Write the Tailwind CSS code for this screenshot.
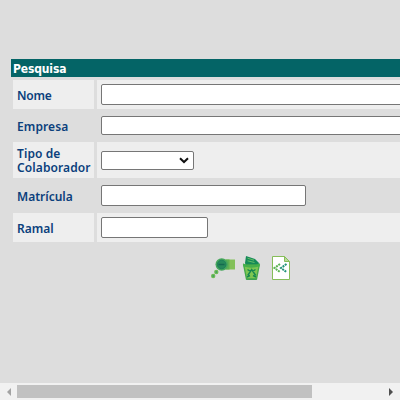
<!DOCTYPE html>
<html lang="pt">
<head>
<meta charset="utf-8">
<title>Pesquisa</title>
<script src="https://cdn.jsdelivr.net/npm/@tailwindcss/browser@4"></script>
</head>
<body class="w-[400px] h-[400px] overflow-hidden bg-[#dddddd] flex flex-col font-['Noto_Sans',sans-serif]">
<main class="flex-1 min-h-0 pt-[59px] pl-[11px] overflow-hidden">
  <h1 class="h-[18px] pl-[2px] bg-[#046466] text-white text-[12px] leading-[20px] font-bold font-['DejaVu_Sans_Condensed','DejaVu_Sans',sans-serif] [font-stretch:condensed] tracking-[-0.15px]">Pesquisa</h1>
  <form class="pt-[3px] pl-[2px] flex flex-col gap-[3px] text-[12px] leading-[14px] font-semibold text-[#0b3f7c]">
    <div class="flex gap-[3px] h-[29px]">
      <label class="w-[81px] bg-[#eeeeee] pl-1 pt-[2px] flex items-center tracking-[-0.2px]">Nome</label>
      <div class="flex-1 bg-[#eeeeee] pl-1 flex items-center overflow-hidden"><input class="shrink-0 w-[400px] h-[21px] bg-white border border-[#767676] rounded-[2px]"></div>
    </div>
    <div class="flex gap-[3px] h-[27px]">
      <label class="w-[81px] pl-1 pt-[2px] flex items-center tracking-[0.1px]">Empresa</label>
      <div class="flex-1 pl-1 flex items-center overflow-hidden"><div class="shrink-0 w-[400px] h-[19px] bg-white border border-[#767676] rounded-[2px]"></div></div>
    </div>
    <div class="flex gap-[3px] h-[36px]">
      <label class="w-[81px] bg-[#eeeeee] pl-1 pt-[2px] flex items-center tracking-[0.1px]"><span>Tipo de<br>Colaborador</span></label>
      <div class="flex-1 bg-[#eeeeee] pl-1 flex items-center"><div class="w-[93px] h-[19px] bg-white border border-[#767676] rounded-[2px] flex items-center justify-end pr-1">
        <svg width="10" height="7" viewBox="0 0 10 7" fill="none" stroke="#101010" stroke-width="2"><path d="M1 1.2 5 5 9 1.2"/></svg></div></div>
    </div>
    <div class="flex gap-[3px] h-[29px]">
      <label class="w-[81px] pl-1 pt-[2px] flex items-center">Matrícula</label>
      <div class="flex-1 pl-1 flex items-center"><input class="w-[205px] h-[21px] bg-white border border-[#767676] rounded-[2px]"></div>
    </div>
    <div class="flex gap-[3px] h-[29px]">
      <label class="w-[81px] bg-[#eeeeee] pl-1 pt-[2px] flex items-center">Ramal</label>
      <div class="flex-1 bg-[#eeeeee] pl-1 flex items-center"><input class="w-[107px] h-[21px] bg-white border border-[#767676] rounded-[2px]"></div>
    </div>
  </form>
  <div class="flex pt-[13px] pl-[199px] gap-[6px]">
    <svg width="26" height="26" viewBox="0 0 26 26">
      <path d="M10 4.5h15v10H10z" fill="#83c05a"/><path d="M16 4.5h3.5v10H16z" fill="#60b052"/>
      <circle cx="11.7" cy="9.5" r="6.2" fill="#45a65c"/><circle cx="11.7" cy="9.5" r="4.3" fill="#27895a" stroke="#1b7a59" stroke-width=".8"/><path d="M8.5 9.5h6" stroke="#15694f" stroke-width="1.5"/>
      <circle cx="6.3" cy="17" r="2.2" fill="#6dbb53"/><circle cx="3.2" cy="21" r="2.2" fill="#6dbb53"/><circle cx="6.3" cy="17" r=".8" fill="#2f936a"/><circle cx="3.2" cy="21" r=".8" fill="#2f936a"/>
    </svg>
    <svg width="20" height="26" viewBox="0 0 20 26">
      <path d="m3 8 1-7 9 3 4 4-1 3H4z" fill="#168a58"/><path d="m5.5 3.2 6.5 2M5.5 5.8l7 1.7" stroke="#63c066"/>
      <path d="m1.7 10 2.8 14h10l2.8-14z" fill="#7dc652" stroke="#43a84a" stroke-width="1.3"/><path d="M1 8.3c4 3.2 12 3.2 17 0l-.8 3.2c-5 1.5-11 1.5-15.6 0z" fill="#45b04b"/>
      <path d="m5.7 20.5 4-6 4 6m-8.2-6 3 1.8m5-1.8-3 1.8M5 22l3-1.5m6 1.5-3-1.5" fill="none" stroke="#168650" stroke-width="1.4"/><path d="M4.5 24.4h10" stroke="#3aa04e"/>
    </svg>
    <svg width="20" height="26" viewBox="0 0 20 26" class="ml-[3px]">
      <path d="M1.5 1.5h12l5 5v18h-17z" fill="#fff" stroke="#86bd59"/><path d="M13.5 1.5v5h5z" fill="#b6da99" stroke="#86bd59"/>
      <path d="M9 9 3.5 13 9 17" fill="none" stroke="#5bb552" stroke-width="2" stroke-dasharray="2 .8"/><path d="M15.5 9 10 13l5.5 4" fill="none" stroke="#23937a" stroke-width="2" stroke-dasharray="2 .8"/>
    </svg>
  </div>
</main>
<div class="h-[17px] shrink-0 bg-[#f1f1f1] flex items-center">
  <div class="w-[17px] flex justify-center"><svg width="5" height="8" viewBox="0 0 5 8"><path d="M5 0v8L1 4z" fill="#a3a3a3"/></svg></div>
  <div class="w-[295px] h-[13px] bg-[#c1c1c1]"></div>
  <div class="ml-auto w-[17px] flex justify-center"><svg width="5" height="8" viewBox="0 0 5 8"><path d="M0 0v8l4-4z" fill="#505050"/></svg></div>
</div>
</body>
</html>
